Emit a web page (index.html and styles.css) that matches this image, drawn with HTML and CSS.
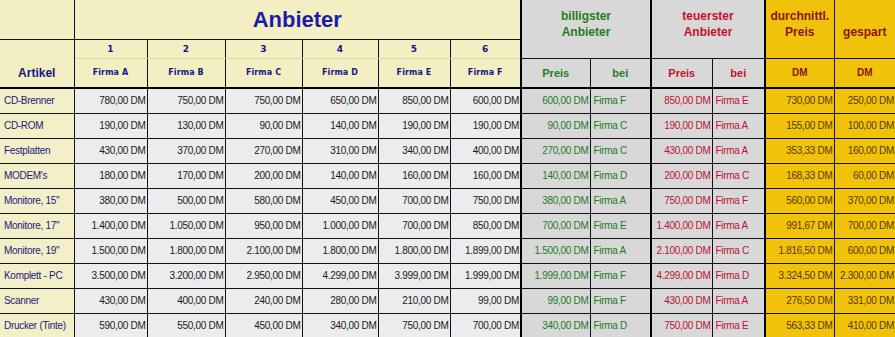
FILE: index.html
```html
<!DOCTYPE html>
<html lang="de">
<head>
<meta charset="utf-8">
<title>Anbieter</title>
<link rel="stylesheet" href="styles.css">
</head>
<body>
<table class="sheet">
  <colgroup>
    <col class="w74"><col class="w73"><col class="w78"><col class="w77"><col class="w76"><col class="w72"><col class="w71">
    <col class="w69"><col class="w61"><col class="w61"><col class="w53"><col class="w69"><col class="w61">
  </colgroup>
  <thead>
    <tr class="r1">
      <td class="hy top-left"></td>
      <th class="hy title" colspan="6">Anbieter</th>
      <th class="hg green big thick-l" colspan="2" rowspan="2">billigster<br>Anbieter</th>
      <th class="hg red big thick-l" colspan="2" rowspan="2">teuerster<br>Anbieter</th>
      <th class="ho dark big thick-l" rowspan="2">durchnittl.<br>Preis</th>
      <th class="ho dark big low" rowspan="2">gespart</th>
    </tr>
    <tr class="r2">
      <th class="hy artikel" rowspan="2">Artikel</th>
      <th class="hy num">1</th>
      <th class="hy num">2</th>
      <th class="hy num">3</th>
      <th class="hy num">4</th>
      <th class="hy num">5</th>
      <th class="hy num">6</th>
    </tr>
    <tr class="r3">
      <th class="hy firma">Firma A</th>
      <th class="hy firma">Firma B</th>
      <th class="hy firma">Firma C</th>
      <th class="hy firma">Firma D</th>
      <th class="hy firma">Firma E</th>
      <th class="hy firma">Firma F</th>
      <th class="hg green sub thick-l">Preis</th>
      <th class="hg green sub">bei</th>
      <th class="hg red sub thick-l">Preis</th>
      <th class="hg red sub">bei</th>
      <th class="ho dark sub thick-l">DM</th>
      <th class="ho dark sub">DM</th>
    </tr>
  </thead>
  <tbody>
    <tr><td class="name">CD-Brenner</td><td class="p">780,00 DM</td><td class="p">750,00 DM</td><td class="p">750,00 DM</td><td class="p">650,00 DM</td><td class="p">850,00 DM</td><td class="p">600,00 DM</td><td class="gp thick-l">600,00 DM</td><td class="gb">Firma F</td><td class="rp thick-l">850,00 DM</td><td class="rb">Firma E</td><td class="op thick-l">730,00 DM</td><td class="op">250,00 DM</td></tr>
    <tr><td class="name">CD-ROM</td><td class="p">190,00 DM</td><td class="p">130,00 DM</td><td class="p">90,00 DM</td><td class="p">140,00 DM</td><td class="p">190,00 DM</td><td class="p">190,00 DM</td><td class="gp thick-l">90,00 DM</td><td class="gb">Firma C</td><td class="rp thick-l">190,00 DM</td><td class="rb">Firma A</td><td class="op thick-l">155,00 DM</td><td class="op">100,00 DM</td></tr>
    <tr><td class="name">Festplatten</td><td class="p">430,00 DM</td><td class="p">370,00 DM</td><td class="p">270,00 DM</td><td class="p">310,00 DM</td><td class="p">340,00 DM</td><td class="p">400,00 DM</td><td class="gp thick-l">270,00 DM</td><td class="gb">Firma C</td><td class="rp thick-l">430,00 DM</td><td class="rb">Firma A</td><td class="op thick-l">353,33 DM</td><td class="op">160,00 DM</td></tr>
    <tr><td class="name">MODEM's</td><td class="p">180,00 DM</td><td class="p">170,00 DM</td><td class="p">200,00 DM</td><td class="p">140,00 DM</td><td class="p">160,00 DM</td><td class="p">160,00 DM</td><td class="gp thick-l">140,00 DM</td><td class="gb">Firma D</td><td class="rp thick-l">200,00 DM</td><td class="rb">Firma C</td><td class="op thick-l">168,33 DM</td><td class="op">60,00 DM</td></tr>
    <tr><td class="name">Monitore, 15"</td><td class="p">380,00 DM</td><td class="p">500,00 DM</td><td class="p">580,00 DM</td><td class="p">450,00 DM</td><td class="p">700,00 DM</td><td class="p">750,00 DM</td><td class="gp thick-l">380,00 DM</td><td class="gb">Firma A</td><td class="rp thick-l">750,00 DM</td><td class="rb">Firma F</td><td class="op thick-l">560,00 DM</td><td class="op">370,00 DM</td></tr>
    <tr><td class="name">Monitore, 17"</td><td class="p">1.400,00 DM</td><td class="p">1.050,00 DM</td><td class="p">950,00 DM</td><td class="p">1.000,00 DM</td><td class="p">700,00 DM</td><td class="p">850,00 DM</td><td class="gp thick-l">700,00 DM</td><td class="gb">Firma E</td><td class="rp thick-l">1.400,00 DM</td><td class="rb">Firma A</td><td class="op thick-l">991,67 DM</td><td class="op">700,00 DM</td></tr>
    <tr><td class="name">Monitore, 19"</td><td class="p">1.500,00 DM</td><td class="p">1.800,00 DM</td><td class="p">2.100,00 DM</td><td class="p">1.800,00 DM</td><td class="p">1.800,00 DM</td><td class="p">1.899,00 DM</td><td class="gp thick-l">1.500,00 DM</td><td class="gb">Firma A</td><td class="rp thick-l">2.100,00 DM</td><td class="rb">Firma C</td><td class="op thick-l">1.816,50 DM</td><td class="op">600,00 DM</td></tr>
    <tr><td class="name">Komplett - PC</td><td class="p">3.500,00 DM</td><td class="p">3.200,00 DM</td><td class="p">2.950,00 DM</td><td class="p">4.299,00 DM</td><td class="p">3.999,00 DM</td><td class="p">1.999,00 DM</td><td class="gp thick-l">1.999,00 DM</td><td class="gb">Firma F</td><td class="rp thick-l">4.299,00 DM</td><td class="rb">Firma D</td><td class="op thick-l">3.324,50 DM</td><td class="op">2.300,00 DM</td></tr>
    <tr><td class="name">Scanner</td><td class="p">430,00 DM</td><td class="p">400,00 DM</td><td class="p">240,00 DM</td><td class="p">280,00 DM</td><td class="p">210,00 DM</td><td class="p">99,00 DM</td><td class="gp thick-l">99,00 DM</td><td class="gb">Firma F</td><td class="rp thick-l">430,00 DM</td><td class="rb">Firma A</td><td class="op thick-l">276,50 DM</td><td class="op">331,00 DM</td></tr>
    <tr><td class="name">Drucker (Tinte)</td><td class="p">590,00 DM</td><td class="p">550,00 DM</td><td class="p">450,00 DM</td><td class="p">340,00 DM</td><td class="p">750,00 DM</td><td class="p">700,00 DM</td><td class="gp thick-l">340,00 DM</td><td class="gb">Firma D</td><td class="rp thick-l">750,00 DM</td><td class="rb">Firma E</td><td class="op thick-l">563,33 DM</td><td class="op">410,00 DM</td></tr>
  </tbody>
</table>
</body>
</html>
```
FILE: styles.css
```css
html, body {
  margin: 0;
  padding: 0;
  background: #ffffff;
}
body {
  font-family: "Liberation Sans", Arial, sans-serif;
  overflow: hidden;
}
.sheet {
  border-collapse: collapse;
  table-layout: fixed;
  width: 895px;
  font-size: 10px;
  letter-spacing: -0.3px;
}
.w74 { width: 74px; }
.w73 { width: 73px; }
.w78 { width: 78px; }
.w77 { width: 77px; }
.w76 { width: 76px; }
.w72 { width: 72px; }
.w71 { width: 71px; }
.w69 { width: 69px; }
.w61 { width: 61px; }
.w53 { width: 53px; }

.sheet th, .sheet td {
  padding: 0;
  border: 1px solid #111;
  white-space: nowrap;
  overflow: hidden;
}
.r1 { height: 39px; }
.r2 { height: 19px; }
.r3 { height: 30px; }
.sheet tbody tr { height: 25px; }

.sheet tr:first-child > * { border-top: none; }
.sheet tr > *:first-child { border-left: none; }
.sheet tr > *:last-child { border-right: none; }

.hy { background: #f4efc3; color: #14148a; }
.hg { background: #d8d8d8; }
.ho { background: #f0c30a; }

.sheet .title {
  font-size: 22px;
  font-weight: bold;
  letter-spacing: 0;
  color: #1c1ca8;
  text-align: center;
  vertical-align: middle;
  padding-top: 2px;
}
.sheet .num {
  font-family: "DejaVu Sans", sans-serif;
  font-size: 9px;
  font-weight: bold;
  letter-spacing: 0;
  text-align: center;
  border-bottom: 1px solid #dcd6a6;
}
.sheet .firma {
  font-family: "DejaVu Sans", sans-serif;
  font-size: 8px;
  font-weight: bold;
  letter-spacing: 0.1px;
  text-align: center;
  border-top: 1px solid #dcd6a6;
  border-bottom: 2px solid #000;
}
.sheet .artikel {
  font-size: 12px;
  font-weight: bold;
  letter-spacing: 0;
  text-align: center;
  vertical-align: bottom;
  padding-bottom: 7px;
  border-bottom: 2px solid #000;
}
.sheet .big {
  font-size: 12px;
  font-weight: bold;
  letter-spacing: 0;
  line-height: 16px;
  text-align: center;
  vertical-align: top;
  padding-top: 8px;
}
.sheet .big.low { padding-top: 24px; }
.sheet .sub {
  font-size: 11px;
  font-weight: bold;
  letter-spacing: 0;
  text-align: center;
  border-bottom: 2px solid #000;
}
.sheet .ho.sub { font-size: 10px; }
.green { color: #1e7d1e; }
.red { color: #c8102e; }
.dark { color: #8a1414; }
.sheet .thick-l { border-left: 2px solid #000; }

.sheet .name {
  background: #f3efc8;
  color: #1a1a7a;
  text-align: left;
  padding-left: 4px;
}
.sheet .p {
  background: #ececec;
  color: #1a1a1a;
  text-align: right;
  padding-right: 1px;
}
.gp, .gb { background: #d8d8d8; color: #1f7a1f; }
.rp, .rb { background: #d8d8d8; color: #c01030; }
.sheet .gp, .sheet .rp { text-align: right; padding-right: 1px; }
.sheet .gb, .sheet .rb { text-align: left; padding-left: 3px; }
.sheet .op {
  background: #f0c30a;
  color: #5a3608;
  text-align: right;
  padding-right: 1px;
}
```
